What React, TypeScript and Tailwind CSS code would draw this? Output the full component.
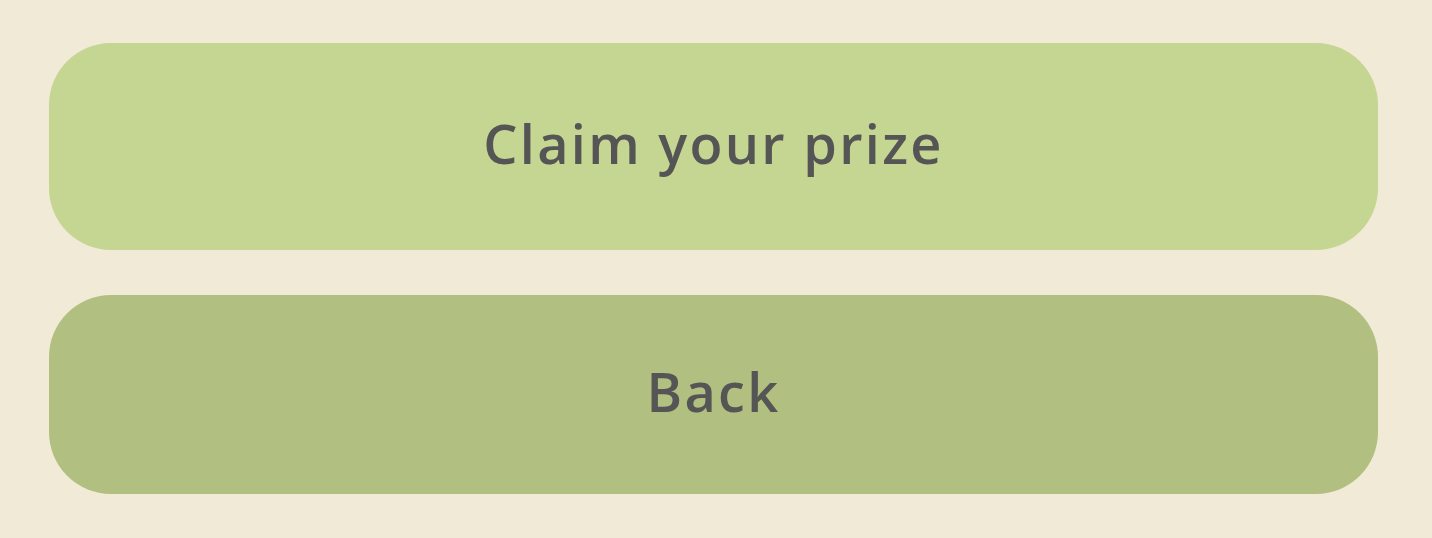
import React from "react";

export default function App() {
  return (
    <div className="w-[1432px] h-[538px] bg-[#f0ead6] pt-[43px] pl-[49px] pr-[54px] flex flex-col gap-[45px] font-['Open_Sans',sans-serif]">
      <button className="h-[207px] w-full rounded-[62px] bg-[#c5d592] flex items-center justify-center pb-[6px] text-[#555555] text-[54px] font-semibold tracking-[2.3px]">
        Claim your prize
      </button>
      <button className="h-[199px] w-full rounded-[62px] bg-[#b1bf80] flex items-center justify-center pb-[6px] text-[#555555] text-[54px] font-semibold tracking-[2.3px]">
        Back
      </button>
    </div>
  );
}
